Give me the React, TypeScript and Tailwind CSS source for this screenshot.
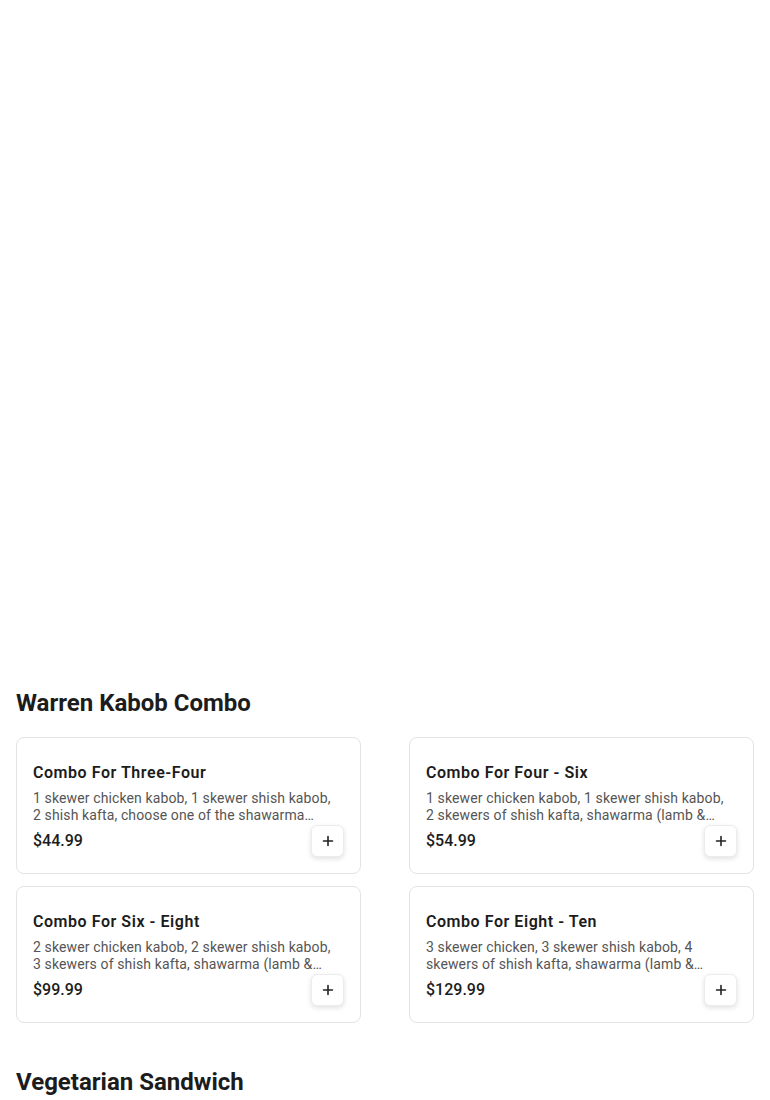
const sections = [
  {
    title: 'Warren Kabob Combo',
    items: [
      {
        name: 'Combo For Three-Four',
        desc: '1 skewer chicken kabob, 1 skewer shish kabob, 2 shish kafta, choose one of the shawarma (chicken or lamb & beef), hummus, rice, salad and pita bread.',
        price: '$44.99',
      },
      {
        name: 'Combo For Four - Six',
        desc: '1 skewer chicken kabob, 1 skewer shish kabob, 2 skewers of shish kafta, shawarma (lamb & beef or chicken), hummus, rice, salad and pita bread.',
        price: '$54.99',
      },
      {
        name: 'Combo For Six - Eight',
        desc: '2 skewer chicken kabob, 2 skewer shish kabob, 3 skewers of shish kafta, shawarma (lamb & beef or chicken), hummus, rice, salad and pita bread.',
        price: '$99.99',
      },
      {
        name: 'Combo For Eight - Ten',
        desc: '3 skewer chicken, 3 skewer shish kabob, 4 skewers of shish kafta, shawarma (lamb & beef or chicken), hummus, rice, salad and pita bread.',
        price: '$129.99',
      },
    ],
  },
  { title: 'Vegetarian Sandwich', items: [] },
];

function PlusIcon() {
  return (
    <svg width="12" height="12" viewBox="0 0 12 12" fill="none" stroke="currentColor" strokeWidth="1.6" strokeLinecap="round">
      <path d="M6 1.5v9M1.5 6h9" />
    </svg>
  );
}

type Item = { name: string; desc: string; price: string };

function MenuCard({ item }: { item: Item }) {
  return (
    <div className="flex flex-col rounded-lg border border-[#e3e3e3] bg-white pl-4 pr-4 pt-[23px] pb-4">
      <div className="text-[16px] leading-6 font-semibold tracking-[0.55px] text-[#1c1c1c]">{item.name}</div>
      <p className="mt-[5px] pr-3 line-clamp-2 text-[14px] leading-[17px] tracking-[0.12px] text-[#555]">{item.desc}</p>
      <div className="mt-[1px] flex items-center justify-between">
        <span className="text-[16px] leading-6 font-medium text-[#1c1c1c]">{item.price}</span>
        <button className="flex h-8 w-[33px] items-center justify-center rounded-md border border-[#ececec] bg-white text-[#222] shadow-[0_2px_5px_rgba(0,0,0,0.12)]">
          <PlusIcon />
        </button>
      </div>
    </div>
  );
}

export default function App() {
  return (
    <div className="min-h-[1100px] bg-white font-['Roboto',sans-serif]">
      <div className="h-[687px]" />
      <div className="px-4">
        {sections.map((section, i) => (
          <section key={section.title} className={i > 0 ? 'mt-[43px]' : ''}>
            <h2 className="text-[24px] leading-8 font-bold text-[#1c1c1c]">{section.title}</h2>
            {section.items.length > 0 && (
              <div className="mt-[18px] grid grid-cols-2 gap-x-12 gap-y-3">
                {section.items.map((item) => (
                  <MenuCard key={item.name} item={item} />
                ))}
              </div>
            )}
          </section>
        ))}
      </div>
    </div>
  );
}
